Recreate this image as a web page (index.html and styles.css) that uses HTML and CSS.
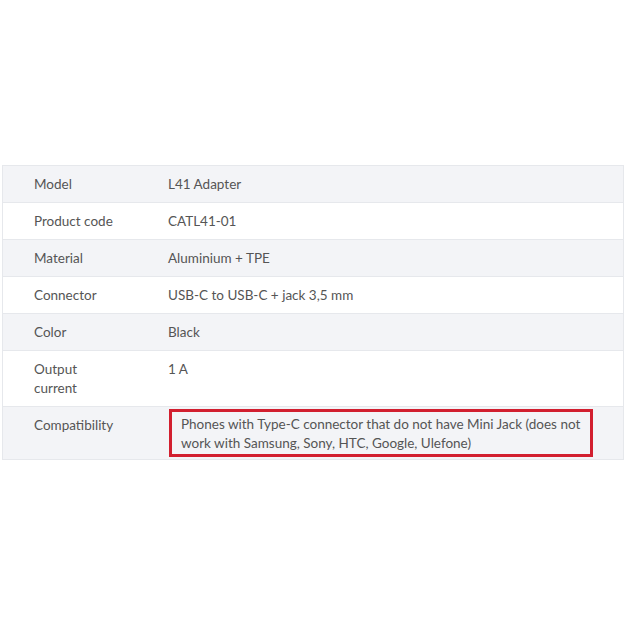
FILE: index.html
```html
<!DOCTYPE html>
<html lang="en">
<head>
    <meta charset="UTF-8">
    <meta name="viewport" content="width=device-width, initial-scale=1.0">
    <title>L41 Adapter - Specifications</title>
    <link rel="stylesheet" href="styles.css">
</head>
<body>
    <div class="specs">
        <table class="spec-table">
            <tr>
                <td class="spec-name">Model</td>
                <td class="spec-value">L41 Adapter</td>
            </tr>
            <tr>
                <td class="spec-name">Product code</td>
                <td class="spec-value">CATL41-01</td>
            </tr>
            <tr>
                <td class="spec-name">Material</td>
                <td class="spec-value">Aluminium + TPE</td>
            </tr>
            <tr>
                <td class="spec-name">Connector</td>
                <td class="spec-value">USB-C to USB-C + jack 3,5 mm</td>
            </tr>
            <tr>
                <td class="spec-name">Color</td>
                <td class="spec-value">Black</td>
            </tr>
            <tr>
                <td class="spec-name">Output current</td>
                <td class="spec-value">1 A</td>
            </tr>
            <tr class="highlight-row">
                <td class="spec-name">Compatibility</td>
                <td class="spec-value">
                    <div class="highlight">Phones with Type-C connector that do not have Mini Jack (does not work with Samsung, Sony, HTC, Google, Ulefone)</div>
                </td>
            </tr>
        </table>
    </div>
</body>
</html>
```

FILE: styles.css
```css
body {
    margin: 0;
    background-color: #fff;
    font-family: Lato, "Open Sans", sans-serif;
    font-size: 13.5px;
    color: #555;
}
.specs {
    padding: 165px 1px 0 2px;
}
.spec-table {
    width: 100%;
    border-collapse: collapse;
}
.spec-table td {
    padding: 9px 14px 8px 31px;
    line-height: 19px;
    border: 1px solid #e6e8ec;
    border-left: none;
    border-right: none;
    vertical-align: top;
}
.spec-table tr:nth-child(odd) td {
    background-color: #f3f4f7;
}
.spec-table tr td:first-child {
    border-left: 1px solid #e6e8ec;
}
.spec-table tr td:last-child {
    border-right: 1px solid #e6e8ec;
}
.spec-name {
    width: 88px;
}
.spec-value {
    padding-left: 32px !important;
}
.highlight-row td.spec-value {
    padding: 2px 14px 2px 32px;
}
.highlight {
    box-sizing: border-box;
    width: 424px;
    margin-left: 1px;
    border: 3px solid #d21f2f;
    padding: 3px 8px 1px 9px;
}
```
